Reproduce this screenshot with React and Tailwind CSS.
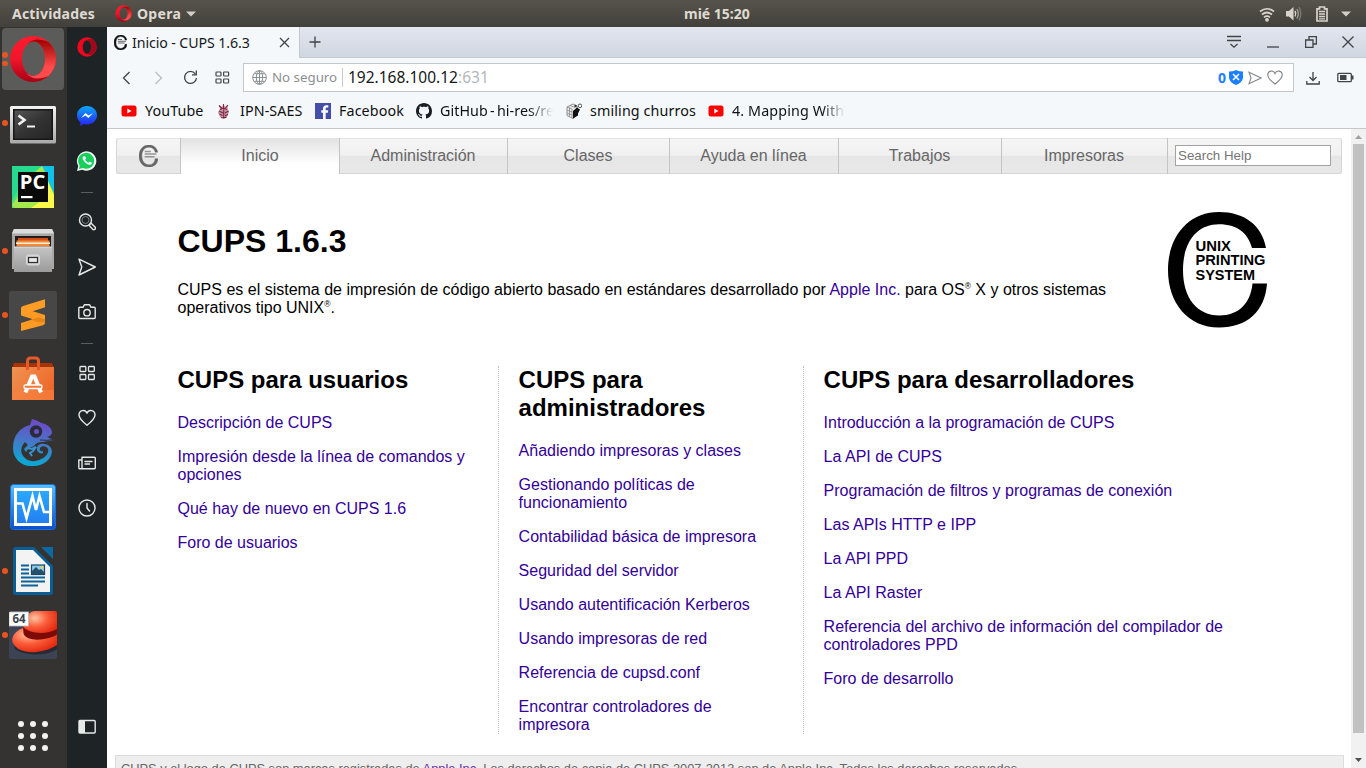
import React from "react";

const Svg = ({ s = 16, w, h, vb, className = "", children }) => (
  <svg
    width={w || s}
    height={h || s}
    viewBox={vb || `0 0 ${w || s} ${h || s}`}
    fill="none"
    className={"block shrink-0 " + className}
  >
    {children}
  </svg>
);

/* ---------- Dock icons ---------- */

const OperaO = ({ s, id }) => (
  <Svg s={s} vb="0 0 48 48">
    <defs>
      <linearGradient id={id + "a"} x1="0" y1="0" x2="0" y2="1">
        <stop offset="0" stopColor="#ff1b2d" />
        <stop offset="0.5" stopColor="#f0162a" />
        <stop offset="1" stopColor="#a70014" />
      </linearGradient>
      <linearGradient id={id + "b"} x1="0" y1="0" x2="0" y2="1">
        <stop offset="0" stopColor="#9c0000" />
        <stop offset="0.7" stopColor="#ff4b4b" />
      </linearGradient>
    </defs>
    <path
      fillRule="evenodd"
      d="M24 1a23 23 0 1 0 0 46a23 23 0 1 0 0-46zM24.5 6.500c6.300 0 11.500 7.600 11.500 17.300s-5.200 17.200-11.500 17.200s-11.500-7.500-11.500-17.200s5.200-17.300 11.500-17.300z"
      fill={`url(#${id}a)`}
    />
    <path
      fillRule="evenodd"
      d="M17 10.500C20 6.500 24 4.500 28 4.500c4 0 8 1.200 11.500 2.500a23 23 0 0 1 0 34c-3.500 1.500-7.500 2.500-11.500 2.500c-4 0-8-2-11-6c2.300 2.300 4.800 3.500 7.500 3.500c6.300 0 11.500-7.600 11.500-17.200S30.800 6.500 24.500 6.500c-2.700 0-5.300 1.500-7.500 4z"
      fill={`url(#${id}b)`}
    />
  </Svg>
);

const TerminalIcon = () => (
  <Svg s={48}>
    <defs>
      <linearGradient id="tf" x1="0" y1="0" x2="0" y2="1">
        <stop offset="0" stopColor="#f4f4f4" />
        <stop offset="1" stopColor="#a9a9a9" />
      </linearGradient>
      <linearGradient id="ts" x1="0" y1="0" x2="1" y2="1">
        <stop offset="0" stopColor="#555" />
        <stop offset="0.5" stopColor="#333" />
        <stop offset="1" stopColor="#262626" />
      </linearGradient>
    </defs>
    <rect x="1" y="7" width="46" height="37.500" rx="1.500" fill="url(#tf)" />
    <rect x="4" y="10" width="40" height="31" fill="#161616" />
    <rect x="5.500" y="11.500" width="37" height="28" fill="url(#ts)" />
    <path d="M9.500 16.500l6 4.500l-6 4.500" stroke="#f2f2f2" strokeWidth="2.600" />
    <path d="M18 27.500h8" stroke="#f2f2f2" strokeWidth="2" />
  </Svg>
);

const PyCharmIcon = () => (
  <Svg s={48}>
    <defs>
      <linearGradient id="pg" x1="0" y1="0" x2="0.4" y2="1">
        <stop offset="0" stopColor="#21d789" />
        <stop offset="0.5" stopColor="#2fdc92" />
        <stop offset="1" stopColor="#7ee45a" />
      </linearGradient>
    </defs>
    <rect x="3" y="3" width="42" height="42" fill="url(#pg)" />
    <path d="M31 3h14v27L35 9z" fill="#0fc3e8" />
    <path d="M3 42l24-34l6-5l3 6l9 26v10H6z" fill="#a5e84e" />
    <path d="M36 12l9 20v13H22l14-10z" fill="#fcf84a" />
    <path d="M3 3h24L9 26L3 38z" fill="#27d98c" />
    <rect x="9" y="9" width="30" height="30" fill="#0a0a0a" />
    <text x="10.800" y="26" fontFamily="Open Sans, sans-serif" fontWeight="700" fontSize="19" textLength="25.500" lengthAdjust="spacingAndGlyphs" fill="#fff">PC</text>
    <rect x="12" y="33" width="11.500" height="2.200" fill="#fff" />
  </Svg>
);

const FilesIcon = () => (
  <Svg s={48}>
    <defs>
      <linearGradient id="fg" x1="0" y1="0" x2="0" y2="1">
        <stop offset="0" stopColor="#c4c4c4" />
        <stop offset="1" stopColor="#9b9b9b" />
      </linearGradient>
    </defs>
    <path d="M5 2h38l2 4v36H3V6z" fill="#a8a8a8" />
    <path d="M5 2h38l2 4.500H3z" fill="#dcdcdc" />
    <rect x="6" y="9" width="36" height="12" fill="#231c18" />
    <rect x="9" y="11" width="30" height="4" fill="#d4501b" />
    <path d="M7.500 13.500h33v6h-33z" fill="#f08a3a" />
    <path d="M7 15.500h34v1.500H7z" fill="#fff0da" />
    <path d="M5 20h38v25H5z" fill="url(#fg)" />
    <path d="M5 20h38" stroke="#e6e6e6" />
    <rect x="17.500" y="28" width="13" height="10" rx="2" fill="#cfcfcf" stroke="#dadada" />
    <rect x="19.500" y="30.500" width="9" height="5" fill="#e8e8e8" stroke="#2e2e2e" strokeWidth="1.200" />
  </Svg>
);

const SublimeIcon = () => (
  <Svg s={48}>
    <rect width="48" height="48" rx="2.500" fill="#474747" />
    <path d="M12 24.500l24 7.500v-8l-24-7.500z" fill="#ff9a22" />
    <path d="M12 17.500Q12 15.500 14 15l22-6.800v8L16 22.800Q12 24.500 12 22.500z" fill="#ff9d26" />
    <path d="M22 28.500l10 3l4-3v-3z" fill="#e27f13" />
    <path d="M12 40v-8l22-7q2-1 2 1v6q0 1.500-2 2.200z" fill="#ff9a22" />
    <path d="M22 28.800l8 2.600l6 .2v-3.500l-7-1.700z" fill="#e8851a" />
  </Svg>
);

const SoftwareIcon = () => (
  <Svg s={48}>
    <defs>
      <linearGradient id="sg" x1="0" y1="0" x2="1" y2="0.6">
        <stop offset="0" stopColor="#f09352" />
        <stop offset="1" stopColor="#ee6829" />
      </linearGradient>
    </defs>
    <path d="M5 8h38l2 5H3z" fill="#a83308" />
    <path d="M3 12h42v33H3z" fill="url(#sg)" />
    <path d="M3 35h42v10H3z" fill="#f68443" opacity="0.6" />
    <path d="M18.500 15V6q0-3 3-3h5q3 0 3 3v9" stroke="#e55a28" strokeWidth="3" />
    <path d="M16.500 37.500l6.500-16h2.500L32 37.500" stroke="#fff" strokeWidth="4" />
    <rect x="15" y="30" width="18" height="3.500" rx="1.500" fill="#f07937" stroke="#fff" strokeWidth="1.400" />
  </Svg>
);

const ChameleonIcon = () => (
  <Svg s={48}>
    <defs>
      <linearGradient id="cg" x1="0.5" y1="0" x2="0.35" y2="1">
        <stop offset="0" stopColor="#7047c9" />
        <stop offset="0.5" stopColor="#4479c8" />
        <stop offset="1" stopColor="#04add3" />
      </linearGradient>
    </defs>
    <path
      d="M23 0c5 1 8 4 13 5c4 2 7 5 7 8c0 3-2 4-5 5l7 3l-11 2c-5 0-7 1-9 4l-5 2l-3 4l-2-3l4-4l-3-3c-5 5-5 12 0 16c4 4 11 4 16 1c5-2 8-6 7-10c-1-3-6-4-8-1c-1 2 1 4 3 3c1 4-5 3-6-1c-1-4 3-7 7-6c5 0 8 4 8 8c-1 8-9 14-19 14C13 48 4 40 4 29C4 17 10 9 21 6z"
      fill="url(#cg)"
    />
    <circle cx="27" cy="12.500" r="6.200" fill="#2a2c38" />
    <circle cx="27.500" cy="12.500" r="2.500" fill="#6950c8" />
    <path d="M19 29l4 1l4-2l-3 4l-3 2l2 3" stroke="#3693d0" strokeWidth="2" />
    <path d="M31 21q8 1 13-.5" stroke="#30313a" strokeWidth="1" />
  </Svg>
);

const MonitorIcon = () => (
  <Svg s={48}>
    <defs>
      <linearGradient id="mg" x1="0" y1="0" x2="0" y2="1">
        <stop offset="0" stopColor="#58c0fa" />
        <stop offset="1" stopColor="#0c4fcb" />
      </linearGradient>
      <linearGradient id="mh" x1="0" y1="0" x2="0" y2="1">
        <stop offset="0" stopColor="#2aabff" />
        <stop offset="1" stopColor="#237df0" />
      </linearGradient>
    </defs>
    <rect x="1.500" y="1.500" width="45" height="45" rx="3" fill="url(#mg)" stroke="#166fdd" />
    <rect x="6.500" y="6.500" width="35" height="35" fill="url(#mh)" stroke="#fff" strokeWidth="3" />
    <path d="M7 20.500h6.500L17.500 35L23.500 13L27 27L30.500 13L35 29H41" stroke="#fff" strokeWidth="2.600" />
  </Svg>
);

const WriterIcon = () => (
  <Svg s={48}>
    <path d="M7 0h18l19 19v26q0 3-3 3H7q-3 0-3-3V3q0-3 3-3z" fill="#095f95" />
    <path d="M7 3h17l17 17v25H7z" fill="#f3f3f3" />
    <path d="M32 0h12v12z" fill="#0b6aa4" />
    <g stroke="#0f6197" strokeWidth="2">
      <path d="M12 18.500h8M12 22.500h8M12 26.500h8M12 30.500h24M12 34.500h24M12 38.500h17" />
    </g>
    <rect x="22.500" y="18" width="13" height="9.500" fill="#8ecbe9" stroke="#104a70" strokeWidth="1.200" />
    <path d="M23 27v-3l4-4l3 3l2-1l3 3v2z" fill="#24506a" />
    <circle cx="33" cy="20.500" r="1.400" fill="#f5d23c" />
  </Svg>
);

const HatIcon = () => (
  <Svg s={48}>
    <defs>
      <radialGradient id="hg" cx="0.35" cy="0.3" r="0.8">
        <stop offset="0" stopColor="#ffc4a4" />
        <stop offset="0.45" stopColor="#fb5f3b" />
        <stop offset="1" stopColor="#e0200a" />
      </radialGradient>
      <clipPath id="hc"><rect width="48" height="48" rx="2" /></clipPath>
    </defs>
    <g clipPath="url(#hc)">
      <rect width="48" height="48" rx="2" fill="#3c4352" />
      <ellipse cx="27" cy="35" rx="22" ry="8.500" fill="#252a35" />
      <path d="M14 17C6 20 2 26 3.500 31c3 8 13 11 24 10c8-1 14-3 20.500-7V16z" fill="url(#hg)" />
      <path d="M14 17C16 10 18 0 26 0h22v19.500C38 25 19 26 14 17z" fill="url(#hg)" />
      <path d="M14 15.500c5 7 23 9 34 2.500v5.500c-10 6.500-31 7.500-33.500-1z" fill="#7d0a04" />
      <rect x="0" y="1" width="19.500" height="14" fill="#fff" stroke="#b8bbc4" strokeWidth="0.800" />
      <text x="3.500" y="12.300" fontFamily="Noto Sans, sans-serif" fontWeight="700" fontSize="11.500" fill="#3d4450">64</text>
    </g>
  </Svg>
);

const dock = [
  { el: <OperaO s={48} id="od" />, dots: 2 },
  { el: <TerminalIcon />, dots: 1 },
  { el: <PyCharmIcon />, dots: 0 },
  { el: <FilesIcon />, dots: 1 },
  { el: <SublimeIcon />, dots: 1 },
  { el: <SoftwareIcon />, dots: 0 },
  { el: <ChameleonIcon />, dots: 0 },
  { el: <MonitorIcon />, dots: 0 },
  { el: <WriterIcon />, dots: 1 },
  { el: <HatIcon />, dots: 1 },
];

const Dock = () => (
  <aside className="flex w-[67px] shrink-0 flex-col bg-[#343331]">
    {dock.map((d, i) => (
      <div key={i} className="relative flex h-16 shrink-0 items-center justify-center pr-px">
        <div className={i === 0 ? "flex h-[62px] w-[62px] items-center justify-center rounded bg-[#5b5b59]" : ""}>{d.el}</div>
        <div className="absolute top-0 left-0.5 flex h-full flex-col justify-center gap-[3px]">
          {Array.from({ length: d.dots }, (_, k) => (
            <span key={k} className="block h-[5.5px] w-[5.5px] rounded-full bg-[#e95420]" />
          ))}
        </div>
      </div>
    ))}
    <div className="mt-auto mb-[17px] ml-[18px] grid w-[30px] grid-cols-3 gap-[6px]">
      {Array.from({ length: 9 }, (_, k) => (
        <span key={k} className="block h-1.5 w-1.5 rounded-full bg-[#f2f2f0]" />
      ))}
    </div>
  </aside>
);

/* ---------- Opera sidebar ---------- */

const side = { stroke: "#e4e8e8", strokeWidth: 1.4, strokeLinejoin: "round", strokeLinecap: "round" };

const OperaFlat = () => (
  <Svg s={20}>
    <path fillRule="evenodd" fill="#f2051f" d="M10 .3a9.700 9.700 0 1 0 0 19.400a9.700 9.700 0 1 0 0-19.400zM10 3.200c2.500 0 4.200 3 4.200 6.800s-1.700 6.800-4.200 6.800s-4.200-3-4.200-6.800s1.700-6.800 4.200-6.800z" />
    <path fill="#a3081a" d="M10 3.200c2-1.600 4.500-1.700 6.500-.3a9.700 9.700 0 0 1 0 14.200c-2 1.400-4.500 1.300-6.500-.3c2.500 0 4.200-3 4.200-6.800s-1.700-6.800-4.200-6.800z" />
  </Svg>
);

const Messenger = () => (
  <Svg s={22}>
    <defs>
      <linearGradient id="ms" x1="0" y1="0" x2="0" y2="1">
        <stop offset="0" stopColor="#08a9fa" />
        <stop offset="1" stopColor="#2b20f5" />
      </linearGradient>
    </defs>
    <path d="M11 1C5.500 1 1 5 1 10.200c0 3 1.300 5.300 3.300 7V21l3.400-1.900c1 .3 2.200.4 3.300.4c5.500 0 10-4.100 10-9.300S16.500 1 11 1z" fill="url(#ms)" />
    <path d="M5 13l4.500-5l3 2.400L17 8l-4.600 5l-3-2.400z" fill="#fff" />
  </Svg>
);

const WhatsApp = () => (
  <Svg s={22}>
    <path d="M1 21l1.300-5A9.700 9.700 0 1 1 6.300 19.700z" fill="#f3f7f4" />
    <path d="M2.900 19l.9-3.300A8 8 0 1 1 6.600 18z" fill="#17cf5b" />
    <path d="M7.300 6.200c-1 1-1 2.400.3 4.300c1.700 2.500 4 4.200 6 4.300c1.300 0 2.400-.9 2.300-2.100l-2.300-1.100l-1.200 1.200c-1.400-.6-2.500-1.700-3.200-3.100l.9-1.100l-1-2.300z" fill="#fff" />
  </Svg>
);

const Grid4 = ({ color = "#e4e8e8" }) => (
  <Svg s={16}>
    <g stroke={color} strokeWidth="1.300">
      <rect x="1" y="1.500" width="5.800" height="5" rx="0.800" />
      <rect x="9.500" y="1.500" width="5.800" height="5" rx="0.800" />
      <rect x="1" y="9.500" width="5.800" height="5" rx="0.800" />
      <rect x="9.500" y="9.500" width="5.800" height="5" rx="0.800" />
    </g>
  </Svg>
);

const sidebarTop = [
  <Svg s={18} key="s"><circle cx="7.500" cy="7" r="6" {...side} /><circle cx="7.500" cy="7" r="3.500" stroke="#8c9292" strokeWidth="0.800" /><path d="M12 11l1.200-.8l4 4q.8 1.500-.5 2.200t-2-.2L11.200 12.600z" {...side} /></Svg>,
  <Svg s={18} key="n"><path d="M1 1.200L17.300 9L1 17l2.800-8z" {...side} /></Svg>,
  <Svg s={18} key="c"><path d="M1.800 4.300h3.200l1.500-2.600h5L13 4.300h3.200q1 0 1 1V14.500q0 1-1 1H1.800q-1 0-1-1V5.300q0-1 1-1z" {...side} /><circle cx="9" cy="9.700" r="3.200" {...side} /></Svg>,
];
const sidebarBottom = [
  <Grid4 key="g" />,
  <Svg s={18} key="h"><path d="M9 16.300C5 13 1 9.800 1 6c0-5 6.200-6 8-1.800C10.800 0 17 1 17 6c0 3.800-4 7-8 10.300z" {...side} /></Svg>,
  <Svg s={18} key="w"><path d="M4 3.300h12.300q1 0 1 1v9.500q0 1-1 1H2q-1.200 0-1.200-1.200V6H4zM4 6v8.500M7 7.500h7M7 10h4.500" {...side} /></Svg>,
  <Svg s={18} key="t"><circle cx="9" cy="9" r="8" {...side} /><path d="M9 4.500V9l2.500 3" {...side} /></Svg>,
];

const Cell = ({ children }) => <div className="flex h-[45px] shrink-0 items-center justify-center pr-px pb-px">{children}</div>;
const Sep = () => (
  <div className="flex h-4 shrink-0 items-center justify-center">
    <span className="block h-px w-3 bg-[#585e5e]" />
  </div>
);

const Sidebar = () => (
  <aside className="flex w-10 shrink-0 flex-col bg-[#1e2425]">
    <div className="mb-[27px] flex h-10 shrink-0 items-center justify-center pr-px"><OperaFlat /></div>
    <Cell><Messenger /></Cell>
    <Cell><WhatsApp /></Cell>
    <Sep />
    {sidebarTop.map((e, i) => <Cell key={i}>{e}</Cell>)}
    <Sep />
    {sidebarBottom.map((e, i) => <Cell key={i}>{e}</Cell>)}
    <div className="mt-auto mb-[18px]">
      <Cell>
        <Svg s={18}><rect x="1" y="2.500" width="16.200" height="12.500" rx="1" {...side} /><rect x="1" y="2.500" width="6" height="12.500" fill="#e8eaea" /></Svg>
      </Cell>
    </div>
  </aside>
);

/* ---------- Desktop top bar ---------- */

const TopBar = () => (
  <header className="flex h-[27px] shrink-0 items-center bg-linear-to-b from-[#57544c] to-[#42403b] font-['Noto_Sans',sans-serif] text-[14px] font-bold text-[#dfdbd2]">
    <div className="w-[115px] pl-3 leading-[27px] tracking-[0.2px]">Actividades</div>
    <OperaO s={17} id="ot" />
    <div className="w-[54px] pl-[5px] tracking-[0.3px]">Opera</div>
    <Svg w={10} h={6}><path d="M0 .5h10l-5 5z" fill="#d2cfc8" /></Svg>
    <div className="flex-1 pl-[488px]">mié 15:20</div>
    <div className="flex items-center pr-[15px]">
      <Svg w={16} h={16} className="mr-[11px]">
        <g stroke="#d8d4cc" strokeWidth="1.700">
          <path d="M1 5.500Q8 0 15 5.500" /><path d="M3 8.500Q8 4.500 13 8.500" /><path d="M5 11.300Q8 9 11 11.300" />
        </g>
        <circle cx="8" cy="13.800" r="1.900" fill="#d8d4cc" />
      </Svg>
      <Svg w={16} h={16} className="mr-[14px]">
        <path d="M0 5h3l4.500-4v13.500L3 10.500H0z" fill="#d8d4cc" />
        <path d="M9 5q1.500 2.500 0 5.500" stroke="#d8d4cc" strokeWidth="1.500" />
        <path d="M11 3q2.500 4.500 0 9.500" stroke="#a29f97" strokeWidth="1.400" />
        <path d="M13 1q3.500 6.500 0 13.500" stroke="#7d7a72" strokeWidth="1.400" />
      </Svg>
      <Svg w={12} h={16} className="mr-[13px]">
        <path d="M1 2.800h2.500V1h5v1.800H11V15H1z" stroke="#d8d4cc" strokeWidth="1.700" />
        <path d="M3 5.500h6M3 8h6M3 10.500h6M3 12.800h6" stroke="#d8d4cc" strokeWidth="1.300" />
      </Svg>
      <Svg w={10} h={6}><path d="M0 .5h10l-5 5z" fill="#d2cfc8" /></Svg>
    </div>
  </header>
);

/* ---------- Browser chrome ---------- */

const ink = { stroke: "#3f4447", strokeWidth: 1.3 };

const CupsMark = ({ s, w, color, x }) => (
  <Svg w={w} h={s} vb="0 0 100 116">
    <path
      d="M99 38C94 14 76 0 52 0C20 0 0 25 0 58s20 58 52 58c27 0 46-16 48-44H85c-2 20-14 32-33 32C30 104 15 86 15 58s15-46 37-46c17 0 28 8 33 24v2z"
      fill={color}
      stroke={color}
      strokeWidth={x}
    />
    <path d="M30 34h32M30 48h62M30 62h52" stroke={color} strokeWidth="8" opacity="0.65" />
  </Svg>
);

const TabStrip = () => (
  <div className="flex h-[31px] shrink-0 items-stretch bg-linear-to-b from-[#e1e5ef] to-[#d0d6df]">
    <div className="flex w-[192px] items-center bg-[#f4f8fa] pl-[7px]">
      <CupsMark w={13} s={15} color="#111" x={3} />
      <span className="w-[152px] pl-[5px] text-[14.2px] tracking-[-0.1px] whitespace-nowrap text-[#17191b]">Inicio - CUPS 1.6.3</span>
      <Svg s={11}><path d="M1 1l9 9M10 1l-9 9" {...ink} /></Svg>
    </div>
    <div className="flex flex-1 items-center border-b border-l border-[#c4c9cd] pl-[9px]">
      <Svg s={12}><path d="M6 .5v11M.5 6h11" {...ink} /></Svg>
      <div className="ml-auto flex items-center pr-3">
        <Svg w={14} h={14} className="mr-[26px]"><path d="M0 1.500h14M0 5.500h14M3.500 9l3.500 3.200L10.500 9" {...ink} /></Svg>
        <Svg w={12} h={12} className="mr-[26px]"><path d="M0 11h12" {...ink} /></Svg>
        <Svg w={12} h={12} className="mr-[25px]"><path d="M.6 4h7.400v7.400H.6zM4 4V.6h7.400V8H8" {...ink} /></Svg>
        <Svg w={12} h={12}><path d="M.5 .5l11 11M11.500 .5l-11 11" {...ink} /></Svg>
      </div>
    </div>
  </div>
);

const AddressRow = () => (
  <div className="flex h-[34px] shrink-0 items-end">
    <div className="flex h-[29px] w-[136px] items-center pl-[15px]">
      <Svg w={9} h={14}><path d="M7.500 1l-6 6l6 6" {...ink} /></Svg>
      <Svg w={9} h={14} className="ml-[23px]"><path d="M1.500 1l6 6l-6 6" stroke="#b9bec1" strokeWidth="1.300" /></Svg>
      <Svg s={15} className="ml-[20px]"><path d="M12.300 3.800A6 6 0 1 0 13.500 8" {...ink} /><path d="M13.300 0.500v4.300H9" {...ink} /></Svg>
      <span className="ml-[17px]"><Svg s={15}><g stroke="#3f4447" strokeWidth="1.200"><rect x="1" y="2" width="5" height="4" rx=".7" /><rect x="8.600" y="2" width="5" height="4" rx=".7" /><rect x="1" y="9" width="5" height="4" rx=".7" /><rect x="8.600" y="9" width="5" height="4" rx=".7" /></g></Svg></span>
    </div>
    <div className="flex h-[29px] w-[1051px] items-center border border-[#c2c7ca] bg-white pl-2 pr-[10px]">
      <Svg s={15}>
        <g stroke="#8a8f92" strokeWidth="1">
          <circle cx="7.500" cy="7.500" r="6.800" /><ellipse cx="7.500" cy="7.500" rx="3.200" ry="6.800" /><path d="M.7 7.500h13.600M7.500 .7v13.600M2 3.700h11M2 11.300h11" />
        </g>
      </Svg>
      <span className="w-[75px] shrink-0 pl-[5px] text-[13.3px] whitespace-nowrap text-[#8b8f92]">No seguro</span>
      <span className="h-[19px] w-px shrink-0 bg-[#c6c9cb]" />
      <span className="flex-1 pl-[5px] text-[15.5px] text-[#16181a]">192.168.100.12<span className="text-[#b4b7b9]">:631</span></span>
      <span className="mr-[3px] text-[14px] font-bold text-[#1a80ff]">0</span>
      <Svg w={14} h={15}><path d="M0 1.500Q4 1.500 7 0Q10 1.500 14 1.500V8Q13 13 7 15Q1 13 0 8z" fill="#1a80ff" /><path d="M4 4l6 6M10 4l-6 6" stroke="#fff" strokeWidth="1.600" /></Svg>
      <Svg w={14} h={14} className="ml-[5px]"><path d="M1 1.300L13 7L1 12.700L3 7z" stroke="#858a8d" strokeWidth="1.100" /></Svg>
      <Svg w={16} h={15} className="ml-[5px]"><path d="M8 14C4 11 .8 8.500 .8 5C.8 .5 6.500-.3 8 3.500C9.500-.3 15.200 .5 15.200 5C15.200 8.500 12 11 8 14z" stroke="#7b8083" strokeWidth="1.100" /></Svg>
    </div>
    <div className="flex h-[29px] flex-1 items-center pl-[12px]">
      <Svg w={14} h={14}><path d="M7 1v8M3.500 6L7 9.500L10.500 6M.8 10v3h12.400v-3" {...ink} /></Svg>
      <Svg w={17} h={11} className="ml-[17px]"><rect x=".8" y="1.300" width="13.500" height="8.400" rx="1" {...ink} /><rect x="3" y="3" width="6.500" height="5" fill="#3f4447" /><path d="M14.500 3.500h2v4h-2z" fill="#3f4447" /></Svg>
    </div>
  </div>
);

const YT = () => (
  <Svg s={16}><rect x=".5" y="2.500" width="15" height="11" rx="2.500" fill="#f00" /><path d="M6.300 5.600L10.500 8l-4.200 2.400z" fill="#fff" /></Svg>
);
const Ipn = () => (
  <Svg s={16}>
    <path d="M3 2l3 2l1.500-3L9 4l3-2.500l-.5 4L13 9l-2 5l-3.500 1.500L4 14L2 9.500L4 6z" fill="#c593a5" />
    <path d="M3 2.500l3 3M12 2L9 5.500M7.500 1v4M4 6.500q3.500-2 7 0M3 8l4 2M12.500 8L9 10M3.500 11l3 1.500M12 11.500l-3 1M7.700 6.500v9M5 14.500q3 1 5.500-.5" stroke="#7d2843" strokeWidth="1.100" />
  </Svg>
);
const Fb = () => (
  <Svg s={16}><rect width="16" height="16" fill="#464fa8" /><path d="M8 16V9.800H6.300V7.300H8V5.700C8 3.500 9.300 2.300 11.300 2.300h2v2.300H12c-.9 0-1.300.4-1.300 1.200v1.500h2.500l-.3 2.500h-2.200V16z" fill="#fff" /></Svg>
);
const Gh = () => (
  <Svg s={16}><path fill="#1b1f23" d="M8 0C3.580 0 0 3.580 0 8c0 3.540 2.290 6.530 5.470 7.590.4.070.55-.17.55-.38 0-.19-.01-.82-.01-1.490-2.010.37-2.530-.49-2.690-.94-.09-.23-.48-.94-.82-1.130-.28-.15-.68-.52-.01-.53.63-.01 1.080.58 1.230.82.72 1.210 1.870.87 2.330.66.07-.52.28-.87.51-1.070-1.780-.2-3.640-.89-3.640-3.950 0-.87.31-1.590.82-2.150-.08-.2-.36-1.020.08-2.120 0 0 .67-.21 2.200.82.64-.18 1.320-.27 2-.27s1.360.09 2 .27c1.530-1.040 2.200-.82 2.200-.82.44 1.100.16 1.920.08 2.120.51.56.82 1.270.82 2.150 0 3.070-1.870 3.750-3.650 3.950.29.25.54.73.54 1.480 0 1.070-.01 1.930-.01 2.200 0 .21.15.46.55.38A8.010 8.010 0 0 0 16 8c0-4.420-3.580-8-8-8z" /></Svg>
);
const Cube = () => (
  <Svg s={16}>
    <path d="M1 4l6-3l4 2v9l-4 3.500l-6-3z" fill="#eee" stroke="#777" strokeWidth=".8" />
    <path d="M1 7l5 2M1 10l5 2M3.500 4.500v9M1 4l5 2v9.500M4 2.500l5 2" stroke="#888" strokeWidth=".8" />
    <path d="M7 8l4-3.500l3 2l-2 4v2l-5 3z" fill="#111" />
    <circle cx="14" cy="2.800" r="1.800" fill="#fff" stroke="#444" strokeWidth=".9" />
    <circle cx="9.500" cy="3" r="1.200" fill="#333" />
  </Svg>
);

const bookmarks = [
  { icon: <YT />, text: "YouTube", w: "w-[95px]", t: "tracking-[0.1px]" },
  { icon: <Ipn />, text: "IPN-SAES", w: "w-[99px]", t: "tracking-[0.1px]" },
  { icon: <Fb />, text: "Facebook", w: "w-[101px]", t: "tracking-[0.1px]" },
  { icon: <Gh />, text: "GitHub - hi-res/re", w: "w-[150px]", t: "w-[113px] overflow-hidden [word-spacing:-1.5px] tracking-[0.05px] [mask-image:linear-gradient(to_right,black_78%,transparent)]" },
  { icon: <Cube />, text: "smiling churros", w: "w-[142px]", t: "tracking-[0.12px]" },
  { icon: <YT />, text: "4. Mapping With", w: "w-[150px]", t: "w-[113px] overflow-hidden tracking-[0.12px] [mask-image:linear-gradient(to_right,black_80%,transparent)]" },
];

const Bookmarks = () => (
  <div className="flex h-[37px] shrink-0 items-center border-b border-[#c4c8cb] pt-px pl-[14px]">
    {bookmarks.map((b, i) => (
      <div key={i} className={"flex shrink-0 items-center gap-2 " + b.w}>
        {b.icon}
        <span className={"text-[14.3px] leading-5 whitespace-nowrap text-[#0f1012] " + b.t}>{b.text}</span>
      </div>
    ))}
  </div>
);

/* ---------- CUPS page ---------- */

const tabs = [
  ["Administración", "w-[168px]"],
  ["Clases", "w-[162px]"],
  ["Ayuda en línea", "w-[169px]"],
  ["Trabajos", "w-[163px]"],
  ["Impresoras", "w-[166px]"],
];

const CupsNav = () => (
  <nav className="ml-[9px] flex h-[36px] w-[1226px] shrink-0 bg-[#eee] text-base leading-[35px] text-[#666]">
    <div className="flex flex-1 rounded-[4px] border border-[#d6d6d6] border-t-[#e4e4e4] bg-[linear-gradient(#f5f5f5,#f0f0f0_48%,#e6e6e6_50%,#e8e8e8)]">
      <div className="flex w-[63px] items-center justify-center pb-px">
        <CupsMark w={19} s={22} color="#666" x={2} />
      </div>
      <div className="-my-px w-[160px] border-x border-[#c4c4c4] bg-linear-to-b from-[#e2e2e2] to-white to-75% text-center">Inicio</div>
      {tabs.map(([t, w]) => (
        <div key={t} className={"-my-px border-r border-[#c4c4c4] pr-px text-center " + w}>{t}</div>
      ))}
      <div className="flex items-center pb-px pl-[7px]">
        <div className="h-[21px] w-[156px] border border-[#a3a3a3] bg-white pl-[2px] text-[13.33px] leading-[19px] text-[#757575]">Search Help</div>
      </div>
    </div>
  </nav>
);

const L = ({ children }) => <a className="block text-[#309]">{children}</a>;

const columns = [
  { title: "CUPS para usuarios", cls: "w-[320.5px] pr-5", items: ["Descripción de CUPS", "Impresión desde la línea de comandos y opciones", "Qué hay de nuevo en CUPS 1.6", "Foro de usuarios"] },
  { title: "CUPS para administradores", cls: "w-[305px] border-l border-dotted border-[#bbb] pl-[19.6px] pr-10", items: ["Añadiendo impresoras y clases", "Gestionando políticas de funcionamiento", "Contabilidad básica de impresora", "Seguridad del servidor", "Usando autentificación Kerberos", "Usando impresoras de red", "Referencia de cupsd.conf", "Encontrar controladores de impresora"] },
  { title: "CUPS para desarrolladores", cls: "w-[460px] border-l border-dotted border-[#bbb] pl-[19.6px] pr-5", items: ["Introducción a la programación de CUPS", "La API de CUPS", "Programación de filtros y programas de conexión", "Las APIs HTTP e IPP", "La API PPD", "La API Raster", "Referencia del archivo de información del compilador de controladores PPD", "Foro de desarrollo"] },
];

const CupsLogo = () => (
  <Svg w={100} h={116}>
    <path
      d="M98 36C94 13 76 0 51 0C20 0 0 25 0 58s20 57.500 51 57.500c28 0 46-16 48-44H84.500c-2 20-14 32-33 32C29 103.500 15 86 15 58s14-45.700 36-45.700c18 0 29 8.700 33 23.700z"
      fill="#000"
    />
    <g fontFamily="Liberation Sans, sans-serif" fontWeight="700" fontSize="15" fill="#000">
      <text x="27.500" y="38.800" textLength="35.500" lengthAdjust="spacingAndGlyphs">UNIX</text>
      <text x="27.500" y="53.300" textLength="70" lengthAdjust="spacingAndGlyphs">PRINTING</text>
      <text x="27.500" y="67.800" textLength="59.500" lengthAdjust="spacingAndGlyphs">SYSTEM</text>
    </g>
  </Svg>
);

const Reg = () => <sup className="top-[-6px] text-[8.5px] leading-none">®</sup>;

const CupsPage = () => (
  <main className="flex flex-1 flex-col overflow-hidden bg-white pt-[9px] font-['Liberation_Sans',Arial,sans-serif] text-base leading-[18px] text-black">
    <CupsNav />
    <section className="flex h-[192px] shrink-0 pl-[70.5px]">
      <div className="w-[990px] pt-[49px]">
        <h1 className="text-[32px] leading-[36px] font-bold">CUPS 1.6.3</h1>
        <p className="mt-[22px] w-[950px]">
          CUPS es el sistema de impresión de código abierto basado en estándares desarrollado por <span className="text-[#309]">Apple Inc.</span> para OS<Reg /> X y otros sistemas operativos tipo UNIX<Reg />.
        </p>
      </div>
      <div className="pt-[38px]"><CupsLogo /></div>
    </section>
    <section className="flex h-[368px] shrink-0 pl-[70.5px]">
      {columns.map((c) => (
        <div key={c.title} className={"h-full shrink-0 " + c.cls}>
          <h2 className="mb-[20px] text-2xl leading-7 font-bold">{c.title}</h2>
          <div className="flex flex-col gap-4">
            {c.items.map((t) => <L key={t}>{t}</L>)}
          </div>
        </div>
      ))}
    </section>
    <footer className="mt-[21px] ml-2 h-[40px] w-[1229px] shrink-0 border border-[#ddd] bg-[#eee] px-[5px] pt-[5px] text-[12.83px] leading-4 whitespace-nowrap text-[#666]">
      CUPS y el logo de CUPS son marcas registradas de <span className="text-[#63a]">Apple Inc</span>. Los derechos de copia de CUPS 2007-2013 son de Apple Inc. Todos los derechos reservados.
    </footer>
  </main>
);

const Scrollbar = () => (
  <div className="flex w-[15px] shrink-0 flex-col items-center bg-[#f1f1f1]">
    <div className="flex h-[15px] items-center"><Svg w={7} h={4}><path d="M0 4L3.500 0L7 4z" fill="#a0a0a0" /></Svg></div>
    <div className="w-[11px] flex-1 bg-[#c1c1c1]" />
    <div className="flex h-[35px] items-end pb-[6px]"><Svg w={7} h={4}><path d="M0 0L3.500 4L7 0z" fill="#505050" /></Svg></div>
  </div>
);

export default function App() {
  return (
    <div className="flex h-[768px] w-[1366px] flex-col overflow-hidden">
      <TopBar />
      <div className="flex min-h-0 flex-1">
        <Dock />
        <Sidebar />
        <div className="flex min-w-0 flex-1 flex-col bg-[#f4f8fa] font-['Noto_Sans',sans-serif]">
          <TabStrip />
          <AddressRow />
          <Bookmarks />
          <div className="flex min-h-0 flex-1">
            <CupsPage />
            <Scrollbar />
          </div>
        </div>
      </div>
    </div>
  );
}
